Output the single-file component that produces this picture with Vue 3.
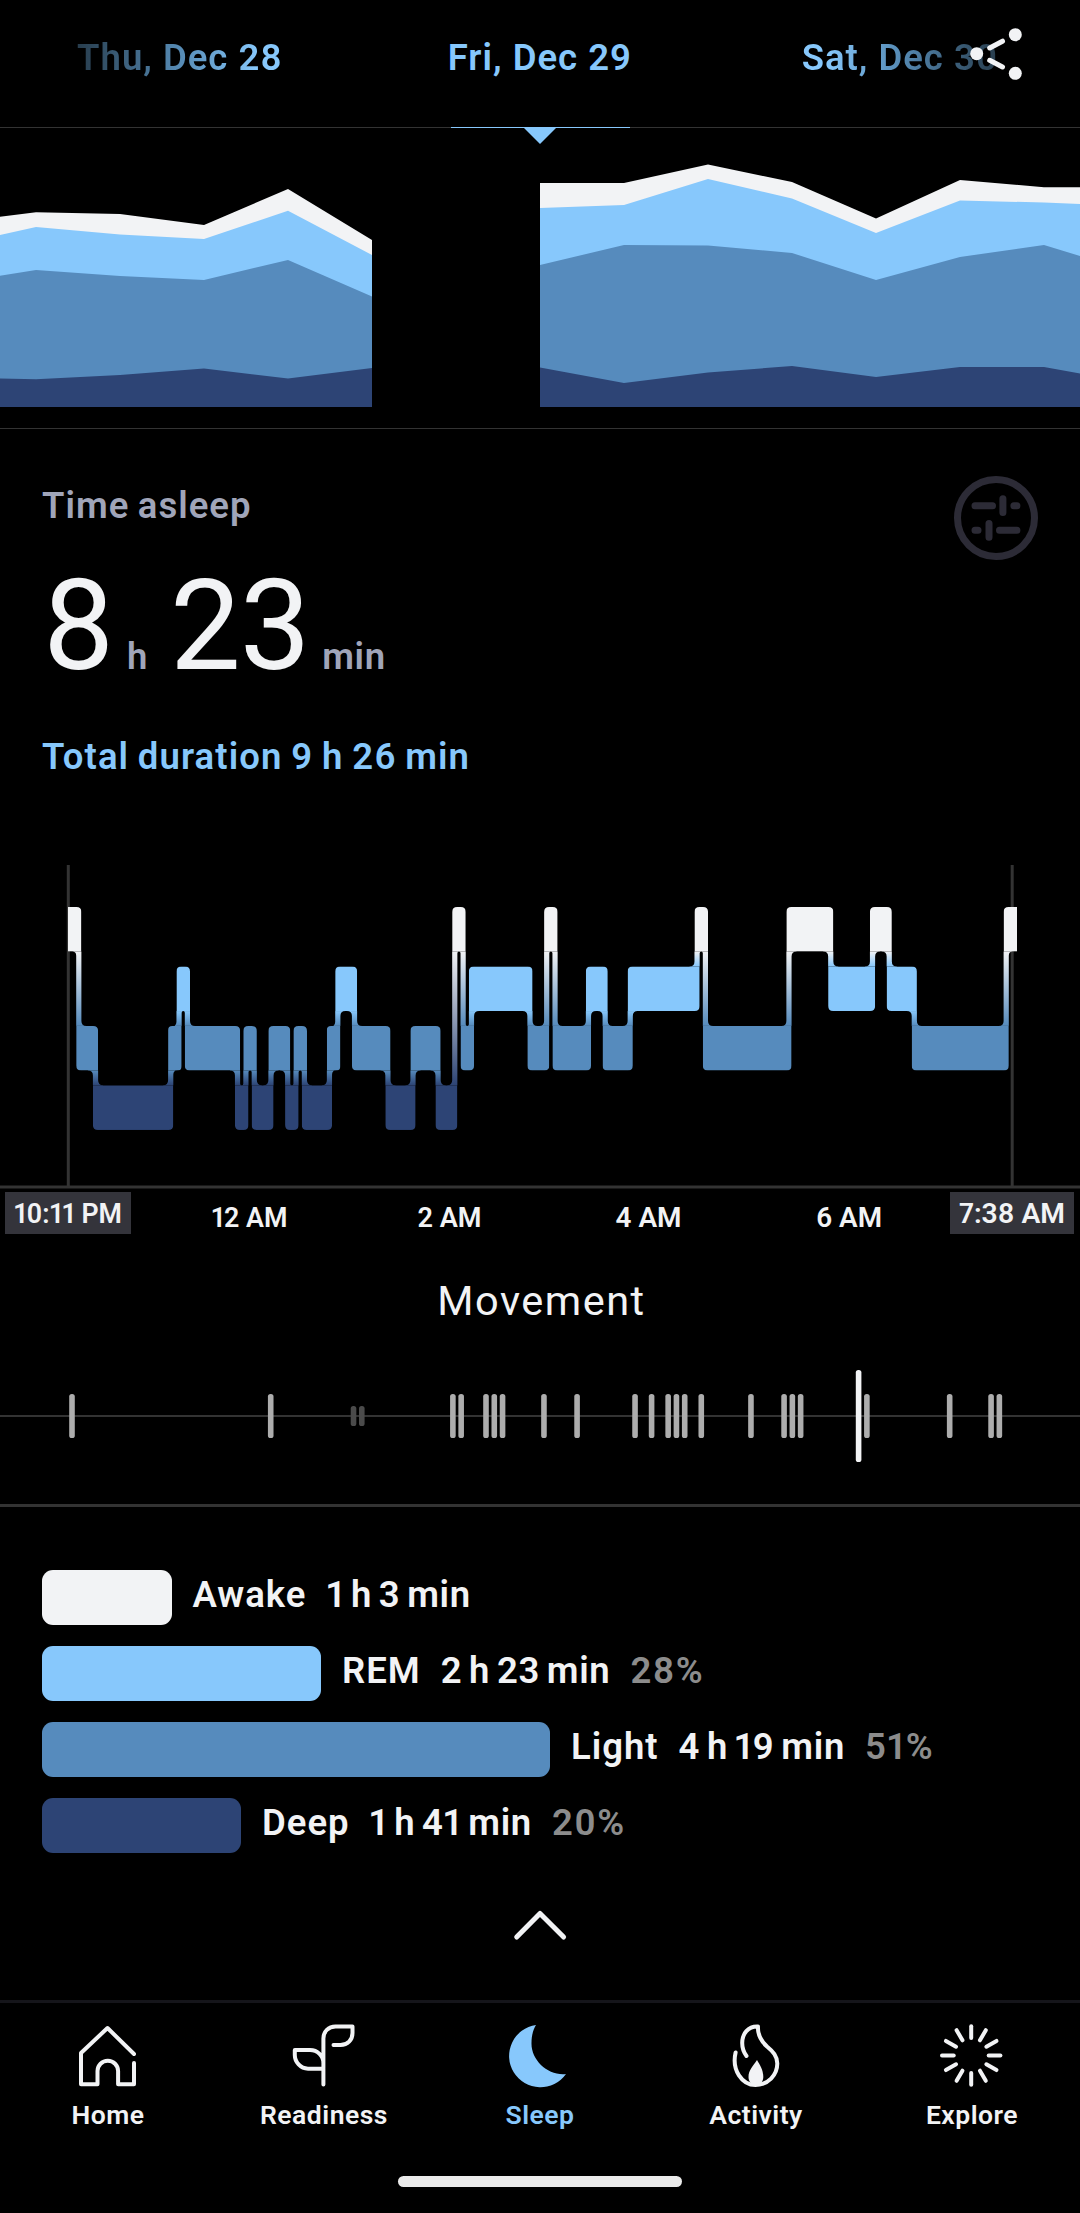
<script setup>
    import { ref, computed } from 'vue'

    const days = ref([
        { label: 'Thu, Dec 28', cls: 'prev' },
        { label: 'Fri, Dec 29', cls: 'current' },
        { label: 'Sat, Dec 30', cls: 'next' }
    ])

    // trend columns: x, then the top edge of awake, rem, light and deep
    const trendLeft = [
        [0, 88.7, 107, 147.7, 250.5],
        [36, 84.3, 99, 142, 251.3],
        [120, 86, 106.5, 148, 247],
        [204, 97, 111, 152, 240.5],
        [288, 61, 82.7, 132, 250.5],
        [372, 112, 127, 168.5, 240]
    ]
    const trendRight = [
        [540, 55, 80, 137, 239.5],
        [624, 55, 77, 117, 255],
        [708, 36.5, 51, 117.5, 244.5],
        [792, 54, 70.5, 125, 238],
        [876, 90.5, 105, 152, 249],
        [960, 52, 72.5, 129, 239],
        [1044, 59.3, 74.5, 117, 239],
        [1080, 59.3, 76, 128, 245.5]
    ]
    const colors = ['#f2f3f5', '#87c8fc', '#568bbd', '#2d4475']

    function area(points, col) {
        const top = points.map((p) => `${p[0]},${p[col + 1]}`)
        return [...top, `${points[points.length - 1][0]},279`, `${points[0][0]},279`].join(' ')
    }

    // [stage, slot where it ends], one slot is five minutes
    // stages: 0 awake, 1 rem, 2 light, 3 deep
    const stages = [
        [0, 0], [2, 2], [3, 11], [2, 12], [1, 13], [2, 19], [3, 20], [2, 21], [3, 23],
        [2, 25], [3, 26], [2, 27], [3, 30], [2, 31], [1, 33], [2, 37], [3, 40], [2, 43],
        [3, 45], [0, 46], [2, 47], [1, 54], [2, 56], [0, 57], [2, 61], [1, 63], [2, 66],
        [1, 74], [0, 75], [2, 85], [0, 90], [1, 95], [0, 97], [1, 100], [2, 111], [0, 112.3]
    ]
    const START = 68
    const END = 1017
    const HALF = 2.6
    const BLOCK = 44.6
    const stageTop = (s) => 57 + s * 59.45
    const slotX = (n) => 78.8 + n * 8.355

    const blocks = computed(() => stages.map(([stage, end], i) => {
        const x1 = i === 0 ? START : slotX(stages[i - 1][1]) - HALF
        const x2 = i === stages.length - 1 ? END : slotX(end) + HALF
        return { stage, x: x1, w: x2 - x1, y: stageTop(stage) }
    }))

    const links = computed(() => stages.slice(0, -1).map(([stage, end], i) => {
        const next = stages[i + 1][0]
        const upper = Math.min(stage, next)
        const lower = Math.max(stage, next)
        const x = slotX(end)
        const before = i === 0 ? x - START : x - slotX(stages[i - 1][1])
        const after = slotX(stages[i + 1][1]) - x
        const x1 = x - Math.min(7.6, before / 2)
        const x2 = x + Math.min(7.6, after / 2)
        const y = stageTop(upper) + BLOCK
        return { id: `fade-${upper}-${lower}`, x: x1, w: x2 - x1, y, h: stageTop(lower) - y }
    }))

    const fades = [[0, 1], [0, 2], [0, 3], [1, 2], [1, 3], [2, 3]]

    // outline round all the stages, with soft corners
    const outline = computed(() => {
        const top = [[START, stageTop(stages[0][0])]]
        const bottom = [[START, stageTop(stages[0][0]) + BLOCK]]
        for (let i = 0; i < stages.length - 1; i++) {
            const a = stageTop(stages[i][0])
            const b = stageTop(stages[i + 1][0])
            const dx = b > a ? HALF : -HALF
            const x = slotX(stages[i][1])
            top.push([x + dx, a], [x + dx, b])
            bottom.push([x - dx, a + BLOCK], [x - dx, b + BLOCK])
        }
        const last = stageTop(stages[stages.length - 1][0])
        top.push([END, last])
        bottom.push([END, last + BLOCK])
        return softPath([...top, ...bottom.reverse()])
    })

    function softPath(pts) {
        let d = ''
        pts.forEach((p, i) => {
            const a = pts[(i + pts.length - 1) % pts.length]
            const b = pts[(i + 1) % pts.length]
            const la = Math.hypot(a[0] - p[0], a[1] - p[1])
            const lb = Math.hypot(b[0] - p[0], b[1] - p[1])
            const flat = p[0] === START || p[0] === END
            const r = flat ? 0 : Math.min(5, la / 2, lb / 2)
            const s = [p[0] + (a[0] - p[0]) * r / la, p[1] + (a[1] - p[1]) * r / la]
            const e = [p[0] + (b[0] - p[0]) * r / lb, p[1] + (b[1] - p[1]) * r / lb]
            d += `${i ? 'L' : 'M'}${s[0]} ${s[1]}Q${p[0]} ${p[1]} ${e[0]} ${e[1]}`
        })
        return d + 'Z'
    }

    const hours = [
        { x: 249.5, w: 76, label: '12 AM' },
        { x: 449.5, w: 64, label: '2 AM' },
        { x: 648.5, w: 66, label: '4 AM' },
        { x: 849, w: 66, label: '6 AM' }
    ]

    // movement: slot and strength (1 low, 2 medium, 3 high)
    const moves = [
        [0, 2], [24, 2], [34, 1], [35, 1], [46, 2], [47, 2], [50, 2], [51, 2], [52, 2],
        [57, 2], [61, 2], [68, 2], [70, 2], [72, 2], [73, 2], [74, 2], [76, 2], [82, 2],
        [86, 2], [87, 2], [88, 2], [95, 3], [96, 2], [106, 2], [111, 2], [112, 2]
    ]
    const moveSize = { 1: 20, 2: 44, 3: 92 }

    const totals = ref([
        { name: 'Awake', time: '1 h 3 min', percent: '', width: 129.5 },
        { name: 'REM', time: '2 h 23 min', percent: '28%', width: 279 },
        { name: 'Light', time: '4 h 19 min', percent: '51%', width: 508 },
        { name: 'Deep', time: '1 h 41 min', percent: '20%', width: 199 }
    ])

    const rays = Array.from({ length: 12 }, (_, i) => i * 30)

    const tabs = ref([
        {
            name: 'Home',
            line: 'M62 34L35.5 8L9 33V64.3H25.5V51a10.3 10.3 0 0 1 20.6 0V64.3H62V43'
        },
        {
            name: 'Readiness',
            line: 'M35.4 64.5V18.5C35.4 11.5 40.5 6.5 47.5 6.5H64.5V13C64.5 20 59.5 25 52.5 25H45.5M35.4 48.7H20C12.5 48.7 6.8 42 6.8 35V30H22C29.5 30 35.4 36 35.4 43'
        },
        {
            name: 'Sleep',
            solid: 'M32 5A31.3 31.3 0 1 0 62 54C44 56 27 40 27.5 23C27.5 16 29 10 32 5Z'
        },
        {
            name: 'Activity',
            line: 'M15.6 32.5C11.5 50 22 65 35.5 65C48 65 57.3 55 57.3 43.5C57.3 36 53 31.5 47 26.5C41 21 37.5 15 38 6.5C28 6 22.2 14 22.2 23C22.2 28 23.5 32 26.5 36',
            solid: 'M37 40C33 46 28.5 50 28.5 57C28.5 61 31 65 35.5 65C40 65 43.3 62 43.3 57C43.3 50 40 45 37 40Z'
        },
        {
            name: 'Explore'
        }
    ])
    const active = ref('Sleep')
</script>

<template>
    <div class="screen">
        <header class="days">
            <div class="day" v-for="day in days" :key="day.label">
                <span :class="day.cls">{{ day.label }}</span>
            </div>
            <svg class="share" width="56" height="56" viewBox="0 0 56 56">
                <circle cx="8.7" cy="27.7" r="6.5" />
                <circle cx="47.3" cy="8.7" r="6.5" />
                <circle cx="47.3" cy="47.3" r="6.5" />
                <path d="M21.7 22L34.5 15.2M21.7 34.3L34.5 41" />
            </svg>
            <div class="marker"></div>
        </header>

        <svg class="trend" width="1080" height="300" viewBox="0 0 1080 300">
            <g v-for="(color, i) in colors" :key="color" :fill="color">
                <polygon :points="area(trendLeft, i)" />
                <polygon :points="area(trendRight, i)" />
            </g>
        </svg>

        <section class="summary">
            <div class="summary-text">
                <h2>Time asleep</h2>
                <p class="big"><b>8</b><i class="h">h</i><b>23</b><i>min</i></p>
                <p class="total">Total duration 9 h 26 min</p>
            </div>
            <svg class="adjust" width="84" height="84" viewBox="0 0 84 84">
                <circle cx="42" cy="42" r="38.5" />
                <path d="M21 29.7H38.5M48.9 22.8V36.5M59.9 29.7H62.9M21 54.3H24M35 47.5V61.2M45.5 54.3H62.9" />
            </svg>
        </section>

        <svg class="hypnogram" width="1080" height="400" viewBox="0 0 1080 400">
            <defs>
                <linearGradient v-for="f in fades" :id="`fade-${f[0]}-${f[1]}`" :key="f.join()" x1="0" y1="0" x2="0" y2="1">
                    <stop offset="0" :stop-color="colors[f[0]]" />
                    <stop offset="1" :stop-color="colors[f[1]]" />
                </linearGradient>
                <clipPath id="night"><path :d="outline" /></clipPath>
            </defs>
            <path class="axis" d="M68.3 15V337M1012.2 15V337M0 337H1080" />
            <g clip-path="url(#night)">
                <rect v-for="l in links" :key="l.x" :x="l.x" :y="l.y" :width="l.w" :height="l.h" :fill="`url(#${l.id})`" />
                <rect v-for="b in blocks" :key="b.x" :x="b.x" :y="b.y" :width="b.w" :height="44.6" :fill="colors[b.stage]" />
            </g>
            <rect class="edge" x="5" y="342" width="126" height="42" />
            <rect class="edge" x="950" y="342" width="124" height="42" />
            <text x="68" y="373" textLength="108" lengthAdjust="spacingAndGlyphs">10:11 PM</text>
            <text v-for="h in hours" :key="h.label" :x="h.x" y="377" :textLength="h.w" lengthAdjust="spacingAndGlyphs">{{ h.label }}</text>
            <text x="1012" y="373" textLength="106" lengthAdjust="spacingAndGlyphs">7:38 AM</text>
        </svg>

        <section class="movement">
            <h3>Movement</h3>
            <svg width="1080" height="100" viewBox="0 0 1080 100">
                <rect class="mid" x="0" y="49" width="1080" height="2" />
                <rect
                    v-for="m in moves"
                    :key="m[0]"
                    :class="'move-' + m[1]"
                    :x="69.2 + m[0] * 8.28"
                    :y="50 - moveSize[m[1]] / 2"
                    width="5.6"
                    :height="moveSize[m[1]]"
                    rx="2.6"
                />
            </svg>
        </section>

        <section class="totals">
            <div class="row" v-for="(t, i) in totals" :key="t.name">
                <div class="bar" :style="{ width: t.width + 'px', backgroundColor: colors[i] }"></div>
                <span class="name">{{ t.name }}</span>
                <span class="time">{{ t.time }}</span>
                <span class="percent" v-if="t.percent">{{ t.percent }}</span>
            </div>
        </section>

        <svg class="chevron" width="60" height="38" viewBox="0 0 60 38">
            <path d="M6.7 31L30 7.5L53.6 31" />
        </svg>

        <nav class="tabs">
            <a v-for="tab in tabs" :key="tab.name" :class="{ on: tab.name === active }" @click="active = tab.name">
                <svg width="72" height="72" viewBox="0 0 72 72">
                    <path v-if="tab.line" class="line" :d="tab.line" />
                    <path v-if="tab.solid" class="solid" :d="tab.solid" />
                    <g v-if="tab.name === 'Explore'" class="line">
                        <path v-for="r in rays" :key="r" d="M35.2 6.3V18" :transform="`rotate(${r} 35.2 35.5)`" />
                    </g>
                </svg>
                <span>{{ tab.name }}</span>
            </a>
        </nav>
        <div class="grip"></div>
    </div>
</template>

<style>
    body{
        margin: 0;
        background-color: #000;
    }
</style>

<style scoped>
    .screen{
        width: 1080px;
        height: 2213px;
        overflow: hidden;
        display: flex;
        flex-direction: column;
        background-color: #000;
        color: #f2f3f5;
        font-family: Roboto, "Liberation Sans", sans-serif;
        font-weight: 600;
        font-variant-numeric: proportional-nums;
    }
    svg{
        display: block;
        flex: none;
    }
    h2, h3, p{
        margin: 0;
        font-weight: 600;
    }
    .days{
        position: relative;
        display: flex;
        height: 127px;
        border-bottom: 1px solid #333;
    }
    .day{
        flex: 1;
        text-align: center;
        font-size: 36.5px;
        line-height: 115px;
        letter-spacing: 1px;
        color: #87c8fc;
    }
    .prev, .next{
        color: transparent;
        background-clip: text;
        -webkit-background-clip: text;
    }
    .prev{
        background-image: linear-gradient(90deg, #273c4c, #568bb5 50%, #87c8fc 88%);
    }
    .next{
        background-image: linear-gradient(270deg, #273c4c, #568bb5 50%, #87c8fc 88%);
    }
    .share{
        position: absolute;
        left: 968px;
        top: 26px;
        fill: #f2f3f5;
        stroke-width: 5;
        stroke-linecap: round;
    }
    .share path{
        stroke: #f2f3f5;
    }
    .marker{
        position: absolute;
        left: 451px;
        top: 127px;
        width: 179px;
        height: 1px;
        background-color: #87c8fc;
    }
    .marker::after{
        content: "";
        position: absolute;
        left: 72px;
        top: 0;
        border: 17px solid transparent;
        border-top-color: #87c8fc;
        border-bottom: 0;
    }
    .trend{
        border-bottom: 1px solid #333;
    }
    .summary{
        display: flex;
        justify-content: space-between;
        align-items: flex-start;
        height: 353px;
        padding: 0 42px;
    }
    .summary-text{
        padding-top: 52px;
    }
    .summary h2, .total{
        font-size: 36.5px;
        line-height: 50px;
        letter-spacing: 1px;
        word-spacing: -1.5px;
    }
    .summary h2{
        color: #a0a5b9;
    }
    .total{
        margin-top: 36px;
        letter-spacing: 1.1px;
        color: #87c8fc;
    }
    .big{
        display: flex;
        align-items: baseline;
        margin-top: 25px;
        height: 140px;
        line-height: 140px;
    }
    .big b{
        font-size: 126px;
        font-weight: 400;
        letter-spacing: -1.2px;
    }
    .big i{
        font-style: normal;
        font-size: 36.5px;
        letter-spacing: 0.6px;
        color: #a0a5b9;
        margin-left: 13px;
    }
    .big .h{
        margin-right: 22px;
    }
    .adjust{
        margin-top: 47px;
        fill: none;
        stroke: #2c2b36;
        stroke-width: 7;
        stroke-linecap: round;
    }
    .hypnogram{
        margin-top: 68px;
    }
    .axis{
        fill: none;
        stroke: #333;
        stroke-width: 3;
    }
    .edge{
        fill: #34343b;
    }
    .hypnogram text{
        fill: #f2f3f5;
        font-size: 28.5px;
        font-weight: 600;
        text-anchor: middle;
    }
    .movement{
        border-bottom: 3px solid #333;
        padding: 21px 0 38px;
    }
    .movement h3{
        text-align: center;
        text-indent: 3px;
        font-size: 41.5px;
        font-weight: 400;
        line-height: 60px;
        letter-spacing: 1.5px;
        margin-bottom: 35px;
    }
    .mid{
        fill: #333;
    }
    .move-1{
        fill: #4b4b4b;
    }
    .move-2{
        fill: #adadad;
    }
    .move-3{
        fill: #f2f3f5;
    }
    .totals{
        display: flex;
        flex-direction: column;
        gap: 21px;
        padding: 63px 42px 0;
    }
    .row{
        display: flex;
        height: 55px;
        font-size: 36.5px;
        line-height: 49px;
        letter-spacing: 0.7px;
        white-space: pre;
    }
    .bar{
        height: 55px;
        border-radius: 11px;
        margin-right: 21px;
    }
    .name{
        letter-spacing: 1px;
    }
    .time, .percent{
        margin-left: 20px;
    }
    .time{
        word-spacing: -3px;
    }
    .percent{
        letter-spacing: 1.4px;
        color: #8c8c8c;
    }
    .chevron{
        margin: 53px auto 56px;
        fill: none;
        stroke: #f2f3f5;
        stroke-width: 5;
        stroke-linecap: round;
        stroke-linejoin: round;
    }
    .tabs{
        display: flex;
        border-top: 3px solid #15151a;
        padding-top: 17px;
    }
    .tabs a{
        flex: 1;
        display: flex;
        flex-direction: column;
        align-items: center;
        gap: 8px;
        color: #f2f3f5;
        font-size: 26.5px;
        line-height: 30px;
        letter-spacing: 0.5px;
        cursor: pointer;
    }
    .tabs .on{
        color: #87c8fc;
    }
    .line{
        fill: none;
        stroke: currentColor;
        stroke-width: 4;
        stroke-linecap: round;
        stroke-linejoin: round;
    }
    .solid{
        fill: currentColor;
    }
    .grip{
        width: 284px;
        height: 11px;
        border-radius: 5.5px;
        margin: 46px auto 0;
        background-color: #ebebeb;
    }
</style>
